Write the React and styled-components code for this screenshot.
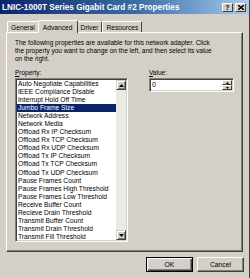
import React from "react";
import styled, { createGlobalStyle } from "styled-components";

const GlobalStyle = createGlobalStyle`
    html, body {
        margin: 0;
        padding: 0;
        background: #d4d0c8;
    }
    * {
        box-sizing: border-box;
    }
`;

const properties = [
    "Auto Negotiate Capabilities",
    "IEEE Compliance Disable",
    "Interrupt Hold Off Time",
    "Jumbo Frame Size",
    "Network Address",
    "Network Media",
    "Offload Rx IP Checksum",
    "Offload Rx TCP Checksum",
    "Offload Rx UDP Checksum",
    "Offload Tx IP Checksum",
    "Offload Tx TCP Checksum",
    "Offload Tx UDP Checksum",
    "Pause Frames Count",
    "Pause Frames High Threshold",
    "Pause Frames Low Threshold",
    "Receive Buffer Count",
    "Recieve Drain Threshold",
    "Transmit Buffer Count",
    "Transmit Drain Threshold",
    "Transmit Fill Threshold",
];

const tabs = ["General", "Advanced", "Driver", "Resources"];

const App = () => {
    return <Window>
        <GlobalStyle />
        <TitleBar>
            <TitleText>LNIC-1000T Series Gigabit Card #2 Properties</TitleText>
            <TitleButtons>
                <CaptionButton>?</CaptionButton>
                <CaptionButton>
                    <svg width="6" height="5" viewBox="0 0 6 5">
                        <path d="M0 0 L6 5 M6 0 L0 5" stroke="#000" strokeWidth="1.4" />
                    </svg>
                </CaptionButton>
            </TitleButtons>
        </TitleBar>

        <Body>
            <TabRow>
                { tabs.map(t =>
                    <Tab key={ t } active={ t === "Advanced" }>{ t }</Tab>
                ) }
            </TabRow>

            <TabPanel>
                <Description>
                    The following properties are available for this network adapter. Click
                    the property you want to change on the left, and then select its value
                    on the right.
                </Description>

                <Columns>
                    <PropertyColumn>
                        <Label><u>P</u>roperty:</Label>
                        <ListBox>
                            <ListItems>
                                { properties.map(p =>
                                    <ListItem key={ p } selected={ p === "Jumbo Frame Size" }>{ p }</ListItem>
                                ) }
                            </ListItems>
                            <ScrollBar>
                                <ScrollButton>
                                    <svg width="5" height="3" viewBox="0 0 5 3"><path d="M2.5 0 L5 3 L0 3 Z" fill="#000" /></svg>
                                </ScrollButton>
                                <ScrollTrack />
                                <ScrollButton>
                                    <svg width="5" height="3" viewBox="0 0 5 3"><path d="M0 0 L5 0 L2.5 3 Z" fill="#000" /></svg>
                                </ScrollButton>
                            </ScrollBar>
                        </ListBox>
                    </PropertyColumn>

                    <ValueColumn>
                        <Label><u>V</u>alue:</Label>
                        <ValueField>
                            <ValueText>0</ValueText>
                            <Spinner>
                                <SpinButton>
                                    <svg width="3" height="2" viewBox="0 0 3 2"><path d="M1.5 0 L3 2 L0 2 Z" fill="#000" /></svg>
                                </SpinButton>
                                <SpinButton>
                                    <svg width="3" height="2" viewBox="0 0 3 2"><path d="M0 0 L3 0 L1.5 2 Z" fill="#000" /></svg>
                                </SpinButton>
                            </Spinner>
                        </ValueField>
                    </ValueColumn>
                </Columns>
            </TabPanel>

            <ButtonRow>
                <DialogButton isDefault>OK</DialogButton>
                <DialogButton>Cancel</DialogButton>
            </ButtonRow>
        </Body>
    </Window>
}

const Window = styled.div`
    position: relative;
    width: 250px;
    height: 278px;
    background: #d4d0c8;
    font-family: "Liberation Sans", Arial, sans-serif;
    font-size: 6.5px;
    color: #000;
    border-right: 1px solid #404040;
    overflow: hidden;
`;

const TitleBar = styled.div`
    height: 14px;
    display: flex;
    align-items: center;
    justify-content: space-between;
    padding: 0 3px 0 2px;
    background: linear-gradient(to right, #0a246a 0%, #3a6ea5 55%, #a6caf0 100%);
`;

const TitleText = styled.div`
    color: #fff;
    font-weight: bold;
    font-size: 8.2px;
    white-space: nowrap;
`;

const TitleButtons = styled.div`
    display: flex;
    gap: 2px;
`;

const CaptionButton = styled.div`
    width: 11px;
    height: 9px;
    display: flex;
    align-items: center;
    justify-content: center;
    background: #d4d0c8;
    border: 1px solid;
    border-color: #fff #404040 #404040 #fff;
    font-weight: bold;
    font-size: 7px;
    line-height: 1;
`;

const Body = styled.div`
    padding: 5px 5px 0 6px;
`;

const TabRow = styled.div`
    display: flex;
    align-items: flex-end;
    height: 13px;
    padding-left: 1px;
`;

const Tab = styled.div`
    height: ${ p => p.active ? "13px" : "11px" };
    margin: ${ p => p.active ? "0 -1px -1px -1px" : "0" };
    padding: ${ p => p.active ? "0 4px 0" : "0 3px" };
    display: flex;
    align-items: center;
    background: #d4d0c8;
    border: 1px solid;
    border-bottom: none;
    border-color: #fff #404040 #404040 #fff;
    border-radius: 2px 2px 0 0;
    position: relative;
    z-index: ${ p => p.active ? 1 : 0 };
    font-size: 6.7px;
    white-space: nowrap;
`;

const TabPanel = styled.div`
    width: 237px;
    height: 220px;
    border: 1px solid;
    border-color: #fff #404040 #404040 #fff;
    box-shadow: inset -1px -1px 0 #808080;
    padding: 6px 8px 0 8px;
`;

const Description = styled.div`
    line-height: 8px;
    width: 202px;
`;

const Columns = styled.div`
    display: flex;
    margin-top: 6px;
    gap: 21px;
`;

const PropertyColumn = styled.div`
    display: flex;
    flex-direction: column;
`;

const ValueColumn = styled.div`
    display: flex;
    flex-direction: column;
`;

const Label = styled.div`
    line-height: 8px;
    height: 9px;
    u {
        text-decoration: underline;
    }
`;

const ListBox = styled.div`
    width: 113px;
    height: 164px;
    display: flex;
    background: #fff;
    border: 1px solid;
    border-color: #808080 #fff #fff #808080;
    box-shadow: inset 1px 1px 0 #404040, inset -1px -1px 0 #d4d0c8;
    padding: 1px;
`;

const ListItems = styled.div`
    flex: 1;
    overflow: hidden;
`;

const ListItem = styled.div`
    height: 8.05px;
    line-height: 8px;
    padding-left: 1px;
    font-size: 6.7px;
    white-space: nowrap;
    background: ${ p => p.selected ? "#0a246a" : "transparent" };
    color: ${ p => p.selected ? "#fff" : "#000" };
`;

const ScrollBar = styled.div`
    width: 10px;
    display: flex;
    flex-direction: column;
`;

const ScrollButton = styled.div`
    height: 10px;
    display: flex;
    align-items: center;
    justify-content: center;
    background: #d4d0c8;
    border: 1px solid;
    border-color: #d4d0c8 #404040 #404040 #d4d0c8;
    box-shadow: inset 1px 1px 0 #fff, inset -1px -1px 0 #808080;
`;

const ScrollTrack = styled.div`
    flex: 1;
    background: #ebe9e4;
`;

const ValueField = styled.div`
    width: 85px;
    height: 14px;
    display: flex;
    background: #fff;
    border: 1px solid;
    border-color: #808080 #fff #fff #808080;
    box-shadow: inset 1px 1px 0 #404040, inset -1px -1px 0 #d4d0c8;
    padding: 1px;
`;

const ValueText = styled.div`
    flex: 1;
    padding-left: 1px;
    line-height: 10px;
    font-size: 7px;
`;

const Spinner = styled.div`
    width: 10px;
    display: flex;
    flex-direction: column;
`;

const SpinButton = styled.div`
    flex: 1;
    display: flex;
    align-items: center;
    justify-content: center;
    background: #d4d0c8;
    border: 1px solid;
    border-color: #fff #404040 #404040 #fff;
`;

const ButtonRow = styled.div`
    display: flex;
    justify-content: flex-end;
    gap: 4px;
    margin-top: 5px;
`;

const DialogButton = styled.div`
    width: 47px;
    height: 15px;
    display: flex;
    align-items: center;
    justify-content: center;
    background: #d4d0c8;
    font-size: 6.8px;
    border: 1px solid;
    border-color: ${ p => p.isDefault ? "#000" : "#fff #404040 #404040 #fff" };
    box-shadow: ${ p => p.isDefault
        ? "inset 1px 1px 0 #fff, inset -1px -1px 0 #404040, inset -2px -2px 0 #808080"
        : "inset -1px -1px 0 #808080" };
`;

export default App;
